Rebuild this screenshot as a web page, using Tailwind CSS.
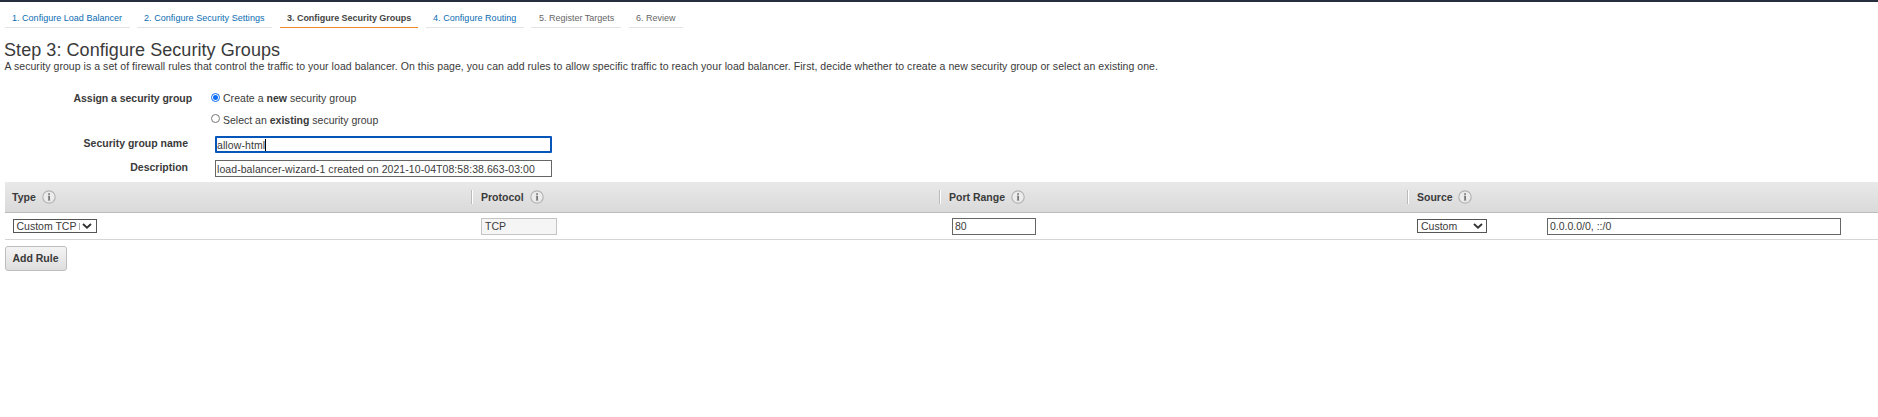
<!DOCTYPE html>
<html lang="en">
<head>
<meta charset="utf-8">
<title>Step 3: Configure Security Groups</title>
<script src="https://cdn.jsdelivr.net/npm/@tailwindcss/browser@4"></script>
</head>
<body class="h-[417px] overflow-hidden bg-white font-['Liberation_Sans',Arial,sans-serif] text-[10.5px] leading-[14px] text-[#3a3a3a]">
<svg class="hidden">
  <symbol id="info" viewBox="0 0 14 14"><circle cx="7" cy="7" r="6.2" fill="#ececec" stroke="#b4b4b4" stroke-width="1.2"/><path d="M7.1 3.3v1.4M7.1 5.8v4.7" fill="none" stroke="#666" stroke-width="1.6"/><path d="M5.8 6.1h1.3M5.8 10.2h2.6" fill="none" stroke="#999" stroke-width=".7"/></symbol>
  <symbol id="chev" viewBox="0 0 10 6"><path d="M1 1l4 3.6L9 1" fill="none" stroke="#333" stroke-width="1.9"/></symbol>
</svg>
<header class="h-[2px] bg-[#252f3e]"></header>
<nav class="flex h-[26px] pl-[5px] text-[9px] leading-[32px] whitespace-nowrap text-[#0a6cb3]">
  <a class="mr-[7px] h-full w-[125px] border-b border-[#e4e4e4] pl-[7px] tracking-[0.02px]">1. Configure Load Balancer</a>
  <a class="mr-2 h-full w-[135px] border-b border-[#e4e4e4] pl-[7px] tracking-[0.05px]">2. Configure Security Settings</a>
  <a class="mr-2 h-full w-[138px] border-b border-[#f0892c] pl-[7px] font-bold tracking-[-0.03px] text-[#444]">3. Configure Security Groups</a>
  <a class="mr-[7px] h-full w-[98px] border-b border-[#e4e4e4] pl-[7px] tracking-[0.04px]">4. Configure Routing</a>
  <a class="mr-2 h-full w-[90px] border-b border-[#e4e4e4] pl-[8px] text-[#666]">5. Register Targets</a>
  <a class="h-full w-[54px] border-b border-[#e4e4e4] pl-[7px] text-[#666]">6. Review</a>
</nav>
<main class="pl-[5px]">
  <h1 class="mt-[11px] -ml-px h-[20px] text-[18px] leading-[22px] tracking-[0.06px]">Step 3: Configure Security Groups</h1>
  <p class="-ml-px h-[15px] pl-[0.5px] tracking-[0.052px] whitespace-nowrap">A security group is a set of firewall rules that control the traffic to your load balancer. On this page, you can add rules to allow specific traffic to reach your load balancer. First, decide whether to create a new security group or select an existing one.</p>
  <form class="h-[108px] pt-[17px]">
    <div class="flex h-[21px]">
      <b class="mr-[19px] w-[187px] text-right tracking-[-0.05px]">Assign a security group</b>
      <span class="mt-[2px] mr-[3px] flex size-[9px] items-center justify-center rounded-full border border-[#0a6cf5]"><i class="size-[5px] rounded-full bg-[#0a6cf5]"></i></span>
      <span class="tracking-[0.03px]">Create a <b>new</b> security group</span>
    </div>
    <div class="flex h-[24px] pl-[206px]">
      <span class="mt-[2px] mr-[3px] size-[9px] rounded-full border border-[#777]"></span>
      <span class="pt-px">Select an <b>existing</b> security group</span>
    </div>
    <div class="flex h-[24px]">
      <b class="mr-[27px] w-[183px] text-right">Security group name</b>
      <div class="flex h-[17px] w-[337px] items-center rounded-[1px] border-2 border-[#0656b9] pt-px tracking-[0.1px]">allow-html<i class="h-3 w-px bg-black"></i></div>
    </div>
    <div class="flex h-[22px]">
      <b class="mr-[27px] w-[183px] text-right">Description</b>
      <div class="flex h-[17px] w-[337px] items-center border border-[#666] pt-px pl-px tracking-[0.07px] whitespace-nowrap">load-balancer-wizard-1 created on 2021-10-04T08:58:38.663-03:00</div>
    </div>
  </form>
  <section>
    <div class="flex h-[31px] border-b border-[#bbb] bg-linear-to-b from-[#e9e9e9] to-[#dadada] font-bold">
      <div class="flex w-[466px] items-center pl-[7px]">Type<svg class="ml-[6px] size-[14px]"><use href="#info"/></svg></div>
      <div class="flex w-[468px] items-center"><i class="h-[14px] w-[2px] border-r border-l border-r-white border-l-[#bbb]"></i><span class="ml-2">Protocol</span><svg class="ml-[6px] size-[14px]"><use href="#info"/></svg></div>
      <div class="flex w-[468px] items-center"><i class="h-[14px] w-[2px] border-r border-l border-r-white border-l-[#bbb]"></i><span class="ml-2">Port Range</span><svg class="ml-[6px] size-[14px]"><use href="#info"/></svg></div>
      <div class="flex items-center"><i class="h-[14px] w-[2px] border-r border-l border-r-white border-l-[#bbb]"></i><span class="ml-2">Source</span><svg class="ml-[5px] size-[14px]"><use href="#info"/></svg></div>
    </div>
    <div class="flex h-[27px] items-center border-b border-[#d5d5d5]">
      <div class="w-[476px] pl-2"><div class="flex h-[14px] w-[84px] items-center border border-[#555] pl-[2.5px] whitespace-nowrap">Custom TCP<i class="ml-[3px] h-[7px] w-px bg-[#aaa]"></i><svg class="ml-[2px] h-[6px] w-[10px]"><use href="#chev"/></svg></div></div>
      <div class="w-[471px]"><div class="flex h-[17px] w-[76px] items-center border border-[#c4c4c4] bg-[#f5f5f5] pl-[3px]">TCP</div></div>
      <div class="w-[465px]"><div class="flex h-[17px] w-[84px] items-center border border-[#666] pl-[2px]">80</div></div>
      <div class="w-[130px]"><div class="flex h-[14px] w-[70px] items-center justify-between border border-[#555] pr-[3px] pl-[3px]">Custom<svg class="h-[6px] w-[10px]"><use href="#chev"/></svg></div></div>
      <div class="flex h-[17px] w-[294px] items-center border border-[#666] pl-[2px]">0.0.0.0/0, ::/0</div>
    </div>
    <div class="mt-[6px] flex h-[25px] w-[62px] items-center justify-center rounded-[3px] border border-[#bdbdbd] bg-linear-to-b from-[#f4f4f4] to-[#dedede] pr-px pb-px font-bold">Add Rule</div>
  </section>
</main>
</body>
</html>
